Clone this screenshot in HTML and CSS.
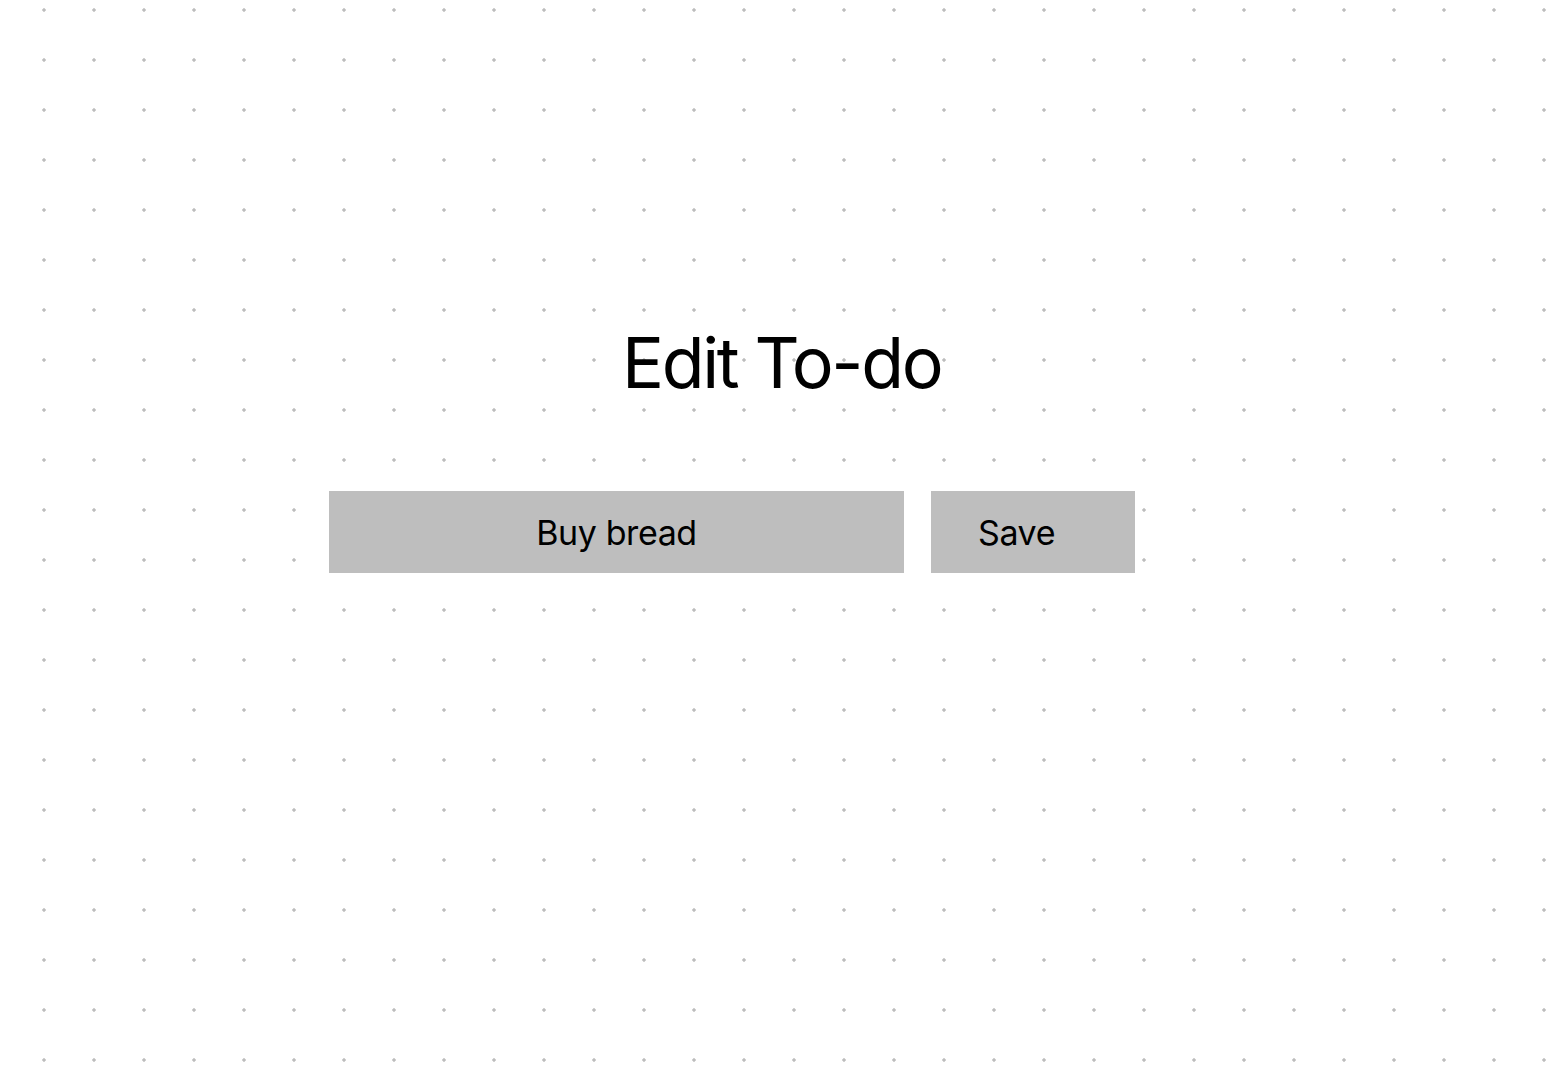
FILE: index.html
```html
<!DOCTYPE html>
<html lang="en">
<head>
<meta charset="utf-8">
<title>Edit To-do</title>
<link rel="stylesheet" href="styles.css">
</head>
<body>
<main class="page">
  <h1 class="title">Edit To-do</h1>
  <form class="edit-form" onsubmit="return false">
    <input class="todo-input" type="text" value="Buy bread">
    <button class="save-btn" type="submit">Save</button>
  </form>
</main>
</body>
</html>
```

FILE: styles.css
```css
html, body {
  margin: 0;
  padding: 0;
  height: 100%;
}
body {
  background-color: #ffffff;
  background-image: radial-gradient(circle at center, #bdbdbd 0, #bdbdbd 1.4px, transparent 2px);
  background-size: 50px 50px;
  background-position: 19px -15px;
  font-family: Inter, "Noto Sans", "Liberation Sans", sans-serif;
  color: #000;
}
.page {
  display: flex;
  flex-direction: column;
  align-items: flex-start;
  padding-top: 318px;
}
.title {
  margin: 0 0 0 622px;
  font-size: 70px;
  font-weight: 400;
  line-height: 90px;
  letter-spacing: -2.4px;
}
.edit-form {
  display: flex;
  gap: 27px;
  margin: 83px 0 0 329px;
}
.todo-input {
  width: 575px;
  height: 82px;
  box-sizing: border-box;
  border: none;
  outline: none;
  background: #bebebe;
  font-family: inherit;
  font-size: 34px;
  letter-spacing: -0.4px;
  color: #000;
  text-align: center;
  padding: 0;
}
.save-btn {
  width: 204px;
  height: 82px;
  border: none;
  background: #bebebe;
  font-family: inherit;
  font-size: 34px;
  letter-spacing: -0.4px;
  color: #000;
  text-align: left;
  padding: 0 0 0 47px;
}
```
